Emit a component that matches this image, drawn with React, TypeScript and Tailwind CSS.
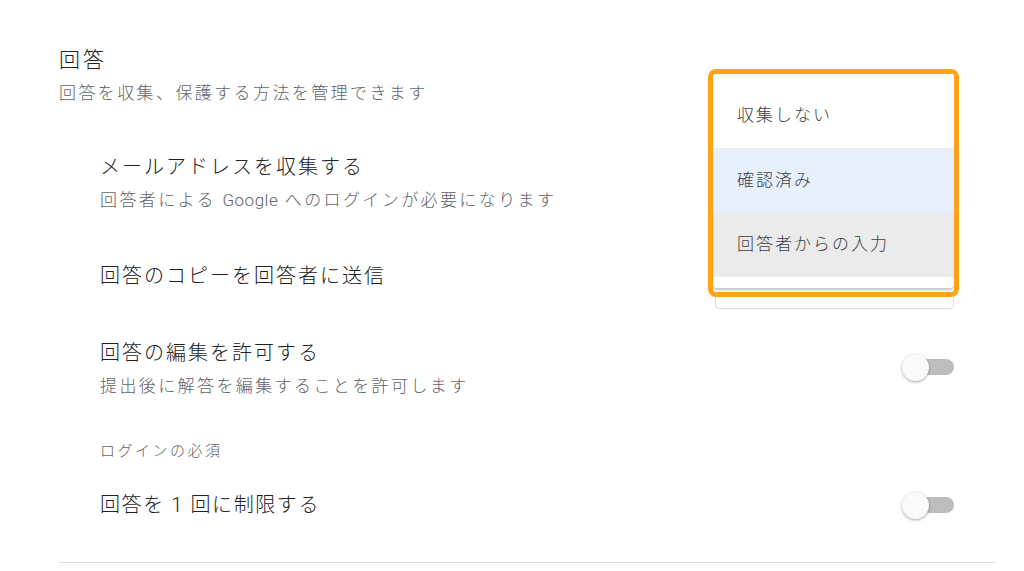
import React from "react";

function Toggle() {
  return (
    <div className="relative w-[52px] h-[28px] flex items-center">
      <div className="absolute right-0 w-[40px] h-[16px] rounded-full bg-[#bdbdbd]" />
      <div className="absolute left-0 w-[27px] h-[27px] rounded-full bg-[#fafafa] shadow-[0_1px_3px_rgba(0,0,0,0.35)]" />
    </div>
  );
}

export default function App() {
  return (
    <div
      className="relative w-[1024px] h-[571px] overflow-hidden bg-white text-[#202124] font-light"
      style={{ fontFamily: 'Roboto, "Noto Sans CJK JP", sans-serif' }}
    >
      <div className="pl-[59px] pr-[29px] pt-[45px]">
        {/* Section header */}
        <div className="text-[21px] leading-[30px] tracking-[3px]">回答</div>
        <div className="text-[17px] leading-[36px] tracking-[2.4px] text-[#5f6368]">
          回答を収集、保護する方法を管理できます
        </div>

        <div className="pl-[41px] pr-[41px]">
          {/* Row 1 */}
          <div className="mt-[41px]">
            <div className="text-[20px] leading-[30px] tracking-[2px]">メールアドレスを収集する</div>
            <div className="text-[17px] leading-[36px] tracking-[2.4px] text-[#5f6368]">
              回答者による <span className="tracking-[0.5px]">Google</span> へのログインが必要になります
            </div>
          </div>

          {/* Row 2 */}
          <div className="mt-[35px] h-[56px] flex justify-between items-start">
            <div className="mt-[8px] text-[20px] leading-[30px] tracking-[2px]">回答のコピーを回答者に送信</div>
            <div className="w-[239px] h-[56px] rounded-[4px] border border-[#dadce0]" />
          </div>

          {/* Row 3 */}
          <div className="mt-[29px] flex justify-between items-start">
            <div>
              <div className="text-[20px] leading-[30px] tracking-[2px]">回答の編集を許可する</div>
              <div className="text-[17px] leading-[36px] tracking-[2.4px] text-[#5f6368]">
                提出後に解答を編集することを許可します
              </div>
            </div>
            <div className="mt-[15px]">
              <Toggle />
            </div>
          </div>

          {/* Label */}
          <div className="mt-[35px] text-[15px] leading-[24px] tracking-[2.5px] text-[#5f6368]">ログインの必須</div>

          {/* Row 4 */}
          <div className="mt-[27px] h-[30px] flex justify-between items-center">
            <div className="text-[20px] leading-[30px] tracking-[1.6px]">回答を 1 回に制限する</div>
            <Toggle />
          </div>
        </div>

        <div className="mt-[42px] border-t border-[#dadce0]" />
      </div>

      {/* Open dropdown menu with highlight */}
      <div className="absolute left-[708px] top-[69px] w-[251px] h-[228px] rounded-[8px] border-[5px] border-[#ffa31a] bg-white overflow-hidden">
        <div className="h-[214px] bg-white rounded-b-[4px] shadow-[0_2px_3px_rgba(0,0,0,0.25)] pt-[9px] text-[17px] tracking-[2px] text-[#3c4043]">
          <div className="h-[65px] flex items-center pl-[24px]">収集しない</div>
          <div className="h-[65px] flex items-center pl-[24px] bg-[#e8f0fe]">確認済み</div>
          <div className="h-[64px] flex items-center pl-[24px] bg-[#ebebeb]">回答者からの入力</div>
        </div>
      </div>
    </div>
  );
}
